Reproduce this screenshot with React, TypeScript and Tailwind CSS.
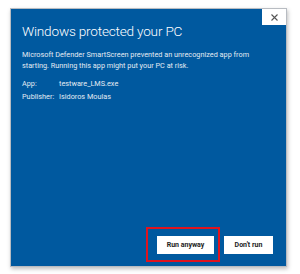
export default function App() {
  return (
    <div className="w-[300px] h-[274px] bg-white pt-[8px] pl-[10px]" style={{ fontFamily: 'Roboto, "Open Sans", sans-serif' }}>
      <div className="w-[277px] h-[259px] border border-[#b8bcc2] shadow-[1px_2px_4px_rgba(0,0,0,0.25)] bg-[#00599f] flex flex-col">
        <div className="flex justify-between items-start">
          <div className="pl-[11px] pt-[13px] text-[13.6px] leading-[18px] font-light text-white tracking-[-0.2px]">
            Windows protected your PC
          </div>
          <div className="w-[24px] h-[16px] bg-white flex items-center justify-center mt-0">
            <svg width="7" height="7" viewBox="0 0 7 7">
              <path d="M0.5 0.5 L6.5 6.5 M6.5 0.5 L0.5 6.5" stroke="#555" strokeWidth="1.1" />
            </svg>
          </div>
        </div>
        <div className="pl-[11px] pr-[18px] pt-[9px] text-[7.3px] leading-[11px] text-[#e3ebf3]">
          Microsoft Defender SmartScreen prevented an unrecognized app from starting. Running this app might put your PC at risk.
        </div>
        <div className="pl-[11px] pt-[6px] text-[7.3px] leading-[13px] text-[#e3ebf3] flex flex-col">
          <div className="flex">
            <span className="w-[37px]">App:</span>
            <span>testware_LMS.exe</span>
          </div>
          <div className="flex">
            <span className="w-[37px]">Publisher:</span>
            <span>Isidoros Moulas</span>
          </div>
        </div>
        <div className="flex-1" />
        <div className="flex justify-end items-center gap-[10px] pr-[13px] pb-[12px]">
          <div className="relative">
            <div className="absolute -left-[11px] -top-[9px] -right-[6px] -bottom-[8px] border-2 border-[#e0141e]" />
            <div className="w-[57px] h-[18px] bg-white flex items-center justify-center text-[7px] font-bold text-[#222]">
              Run anyway
            </div>
          </div>
          <div className="w-[49px] h-[18px] bg-white flex items-center justify-center text-[7px] font-bold text-[#222]">
            Don't run
          </div>
        </div>
      </div>
    </div>
  );
}
